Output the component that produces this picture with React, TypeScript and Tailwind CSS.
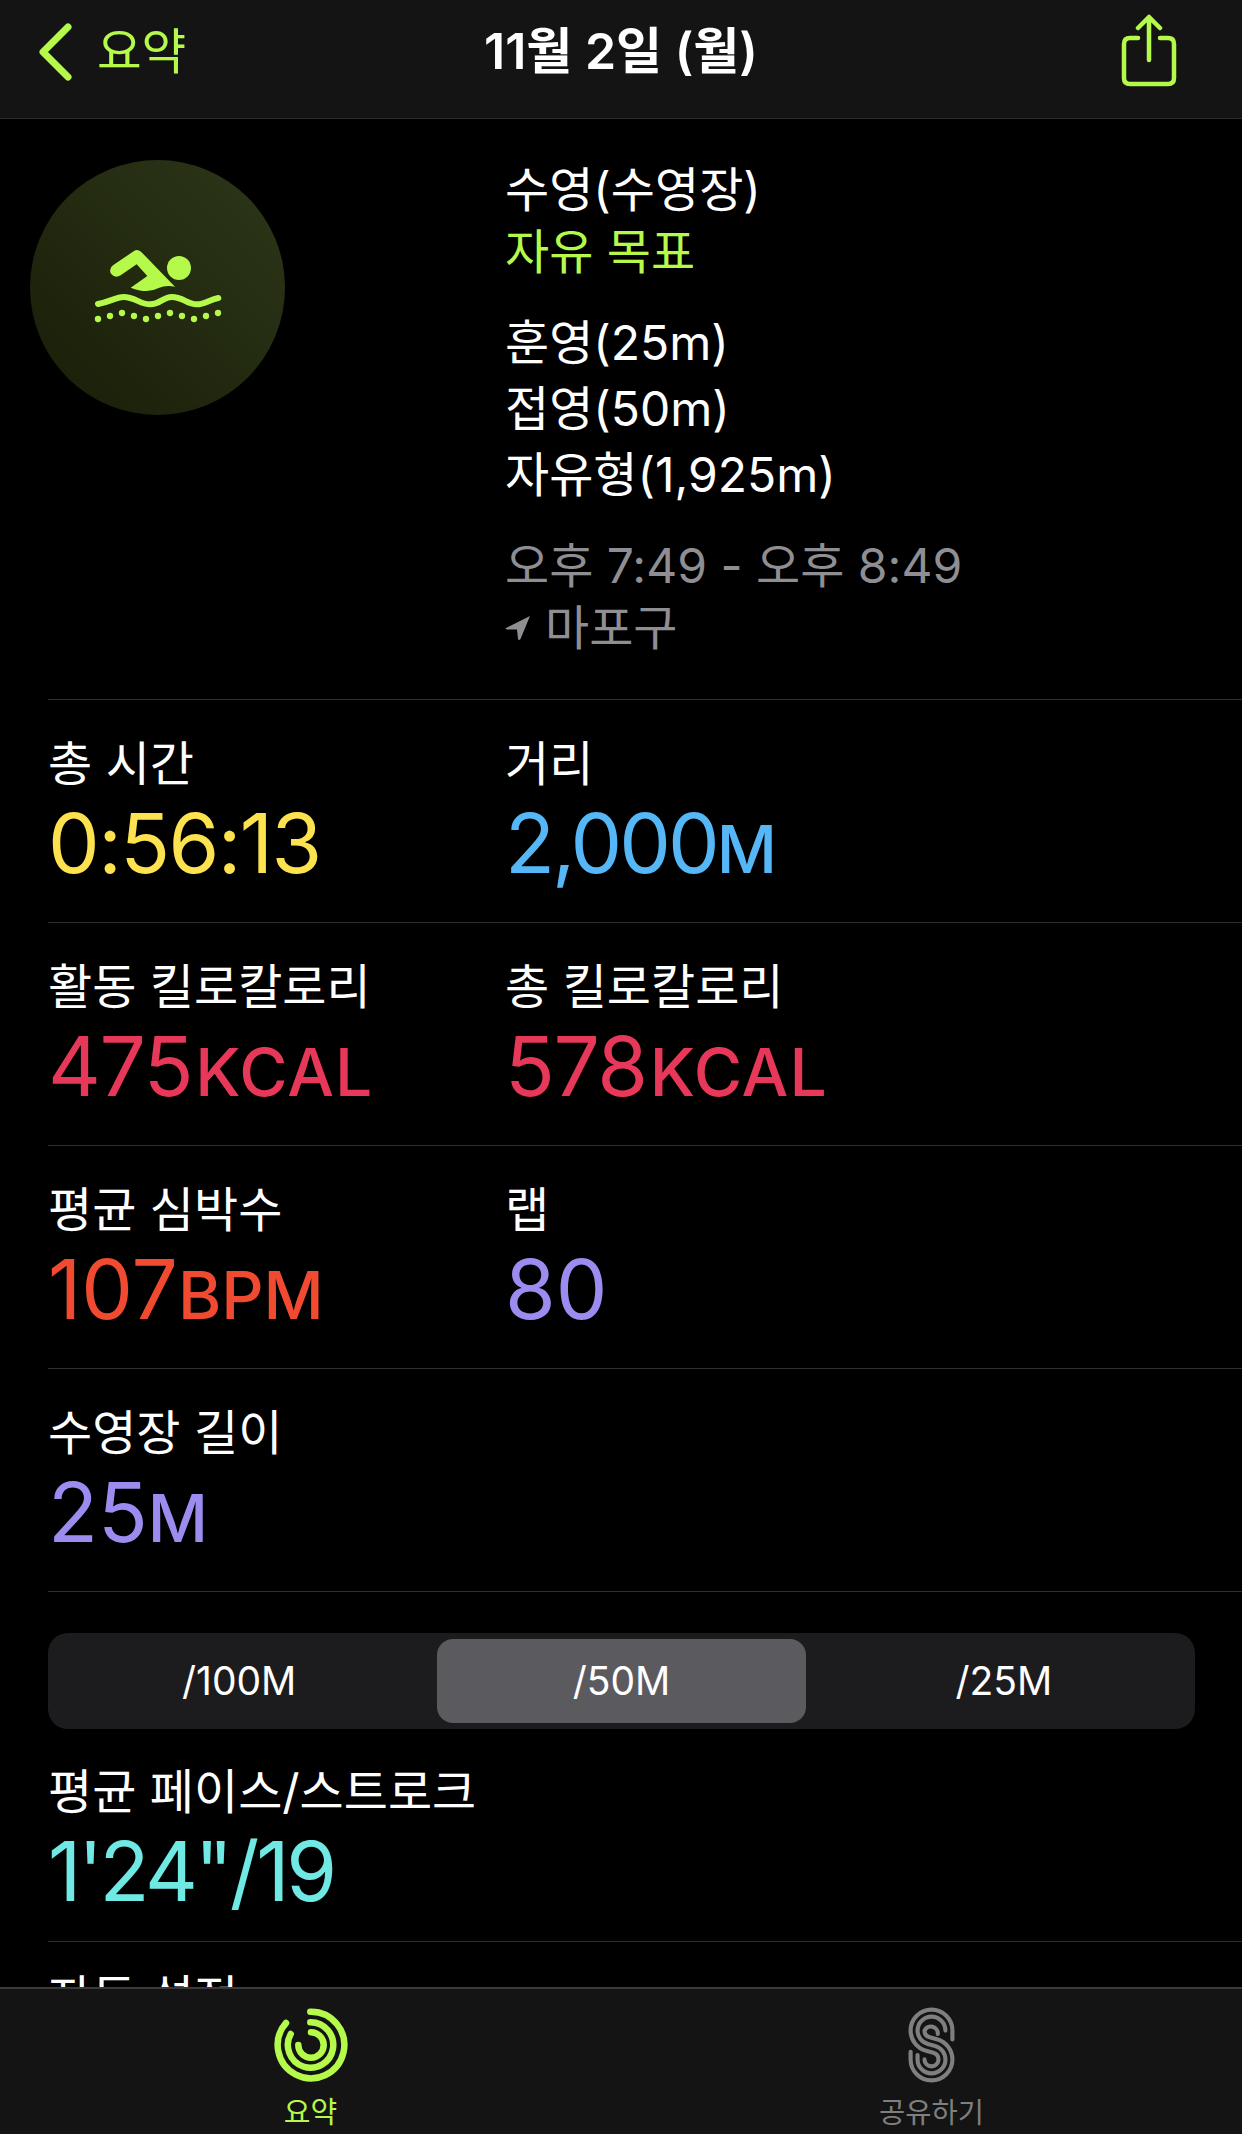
import React from "react";

const LIME = "#b5f94a";

function Stat({ label, value, unit, color }: { label: string; value: React.ReactNode; unit?: React.ReactNode; color: string }) {
  return (
    <div className="flex flex-col">
      <div className="h-[66px] text-[48px] leading-[64px] text-white">{label}</div>
      <div className={`h-[92px] text-[82px] leading-[92px] ${color}`}>
        {value}
        {unit ? <span className="text-[66px] font-medium">{unit}</span> : null}
      </div>
    </div>
  );
}

function Row({ children }: { children: React.ReactNode }) {
  return <div className="grid h-[223px] grid-cols-[457px_1fr] border-t border-[#2e2e30] pt-[32px]">{children}</div>;
}

function Swimmer() {
  const dots = [
    [114, 324], [150, 315], [186, 306], [222, 315], [258, 324], [294, 315],
    [330, 306], [366, 315], [402, 324], [438, 315], [474, 306],
  ];
  return (
    <svg width="200" height="130" viewBox="0 0 600 390" fill={LIME}>
      <circle cx="357" cy="171" r="36" />
      <path d="M222 120 Q232 113 243 122 L345 227 Q318 221 296 231 Q262 250 212 230 L262 195 L230 160 L182 193 Q165 203 153 188 Q145 172 160 162 Z" />
      <path
        d="M114 279 C150 272 170 258 190 258 C225 258 240 280 270 280 C300 280 310 258 335 258 C370 258 380 280 410 280 C435 280 450 265 475 261"
        fill="none"
        stroke={LIME}
        strokeWidth="18"
        strokeLinecap="round"
      />
      {dots.map(([x, y]) => (
        <circle key={x} cx={x} cy={y} r="9.5" />
      ))}
    </svg>
  );
}

function Rings() {
  return (
    <svg width="76" height="76" viewBox="0 0 76 76" fill="none" stroke={LIME} strokeWidth="6.5" strokeLinecap="round">
      <path d="M37.3 4.7 A33.3 33.3 0 1 1 13 16" />
      <path d="M37.3 15.3 A22.7 22.7 0 1 1 17.7 27" />
      <path d="M38 25.3 A12.7 12.7 0 1 1 25.3 38" />
    </svg>
  );
}

function ShareS() {
  return (
    <svg width="47" height="76" viewBox="82 47 140 229" fill="none" stroke="#7f7f7f" strokeWidth="12.5" strokeLinecap="round">
      <path d="M215 145 V118 A63 63 0 0 0 89 118 A63 63 0 0 0 135.6 178.8 L157.5 184.7 A21 21 0 0 1 173 205 A21 21 0 0 1 131 205" />
      <path d="M194 118 A42 42 0 0 0 110 118 A42 42 0 0 0 141.1 158.6 L162.9 164.4 A42 42 0 0 1 194 205 A42 42 0 0 1 110 205 V192" />
      <path d="M171 128 A21 21 0 0 0 131 118 A21 21 0 0 0 146.5 138.3 L168.4 144.2 A63 63 0 0 1 215 205 A63 63 0 0 1 89 205 V182" />
    </svg>
  );
}

const Kcal = () => <span className="ml-[3px] tracking-[1px]">KCAL</span>;

export default function App() {
  return (
    <div className="flex h-[2134px] w-[1242px] flex-col overflow-hidden bg-black font-['Inter','Noto_Sans_CJK_KR',sans-serif] text-white">
      <header className="relative flex h-[119px] shrink-0 items-start justify-between border-b border-[#2c2c2e] bg-[#141414] pl-[39px] pr-[65px]">
        <div className="flex items-center gap-[25px] pt-[23px]">
          <svg width="33" height="58" viewBox="0 0 33 58" fill="none" stroke={LIME} strokeWidth="7" strokeLinecap="round" strokeLinejoin="round">
            <path d="M29 4 L4 29 L29 54" />
          </svg>
          <span className="text-[48.5px] leading-[52px] text-[#b5f94a]">요약</span>
        </div>
        <div className="absolute left-0 right-0 top-[22px] text-center text-[50px] font-semibold leading-[58px]">11월 2일 (월)</div>
        <svg className="mt-[14px]" width="56" height="73" viewBox="0 0 56 73" fill="none" stroke={LIME} strokeWidth="4.5" strokeLinecap="round" strokeLinejoin="round">
          <path d="M17 24 H9 Q3 24 3 30 V64 Q3 70 9 70 H47 Q53 70 53 64 V30 Q53 24 47 24 H39" />
          <path d="M28 46 V3 M17 14 L28 3 L39 14" />
        </svg>
      </header>

      <main className="min-h-0 flex-1 overflow-hidden">
        <section className="flex h-[580px] pl-[30px] pt-[41px]">
          <div className="flex h-[255px] w-[255px] items-center justify-center rounded-full bg-linear-to-tr from-[#191e08] to-[#2d3719] pb-[24px] pl-[5px]">
            <Swimmer />
          </div>
          <div className="ml-[220px] flex flex-col text-[48px]">
            <div className="leading-[60px]">수영(수영장)</div>
            <div className="leading-[64px] text-[#b5f94a]">자유 목표</div>
            <div className="mt-[26px] leading-[66px]">훈영(25m)</div>
            <div className="leading-[66px]">접영(50m)</div>
            <div className="leading-[66px]">자유형(1,925m)</div>
            <div className="mt-[27px] leading-[62px] text-[#8e8e93]">오후 7:49 - 오후 8:49</div>
            <div className="flex items-center gap-[14px] leading-[62px] text-[#8e8e93]">
              <svg width="26" height="26" viewBox="0 0 26 26" fill="#8e8e93">
                <path d="M25 1 L1 13 Q0 14 2 14.5 L12 14.5 L13 24 Q14 26 15.5 24 Z" />
              </svg>
              마포구
            </div>
          </div>
        </section>

        <div className="ml-[48px]">
          <Row>
            <Stat label="총 시간" value={<span className="tracking-[-1.6px]">0:56:13</span>} color="text-[#fde24f]" />
            <Stat label="거리" value={<span className="tracking-[-3px]">2,000</span>} unit="M" color="text-[#56b7f7]" />
          </Row>
          <Row>
            <Stat label="활동 킬로칼로리" value={<span className="tracking-[-1.4px]">475</span>} unit={<Kcal />} color="text-[#e7385a]" />
            <Stat label="총 킬로칼로리" value={<span className="tracking-[-1.4px]">578</span>} unit={<Kcal />} color="text-[#e7385a]" />
          </Row>
          <Row>
            <Stat label="평균 심박수" value={<span>107</span>} unit="BPM" color="text-[#f04b30]" />
            <Stat label="랩" value="80" color="text-[#9d8cf0]" />
          </Row>
          <Row>
            <Stat label="수영장 길이" value="25" unit="M" color="text-[#9d8cf0]" />
            <div />
          </Row>
          <div className="border-t border-[#2e2e30] pr-[47px] pt-[41px]">
            <div className="grid h-[96px] grid-cols-3 items-center gap-[13px] rounded-[20px] bg-[#1c1c1e] px-[6.5px] text-[39px]">
              <div className="text-center">/100M</div>
              <div className="flex h-[84px] items-center justify-center rounded-[16px] bg-[#5b5b5f]">/50M</div>
              <div className="text-center">/25M</div>
            </div>
          </div>
          <div className="h-[212px] pt-[31px]">
            <Stat label="평균 페이스/스트로크" value={<span className="tracking-[-3.2px]">{"1'24\"/19"}</span>} color="text-[#70e8e4]" />
          </div>
          <div className="border-t border-[#2e2e30] pt-[24px]">
            <div className="text-[48px] leading-[64px]">자동 설정</div>
          </div>
        </div>
      </main>

      <nav className="grid h-[147px] shrink-0 grid-cols-[621px_621px] border-t-2 border-[#3a3a3c] bg-[#141414]">
        <div className="flex flex-col items-center pt-[18px]">
          <Rings />
          <span className="mt-[12px] text-[29px] leading-[36px] text-[#b5f94a]">요약</span>
        </div>
        <div className="flex flex-col items-center pt-[18px]">
          <ShareS />
          <span className="mt-[12px] text-[28.5px] leading-[36px] text-[#7f7f7f]">공유하기</span>
        </div>
      </nav>
    </div>
  );
}
